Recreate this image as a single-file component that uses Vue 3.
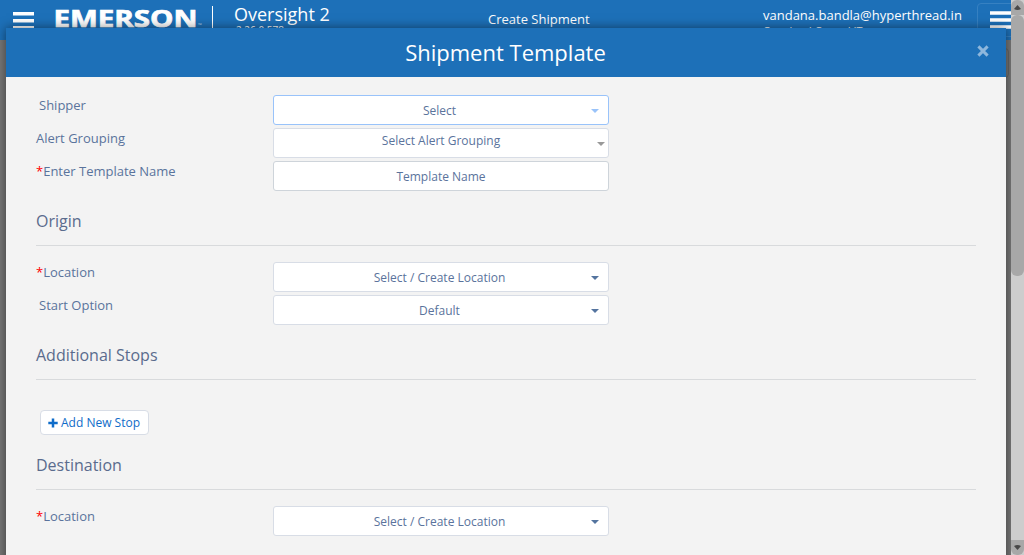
<script setup>
const sections = [
  {
    title: '',
    rows: [
      { label: 'Shipper', indent: true, value: 'Select', kind: 'focused', caret: true },
      { label: 'Alert Grouping', value: 'Select Alert Grouping', kind: 'alert', caret: true },
      { label: 'Enter Template Name', required: true, value: 'Template Name', kind: 'input' },
    ],
  },
  {
    title: 'Origin',
    rows: [
      { label: 'Location', required: true, value: 'Select / Create Location', kind: 'dropdown', caret: true },
      { label: 'Start Option', indent: true, value: 'Default', kind: 'dropdown', caret: true },
    ],
  },
  { title: 'Additional Stops', rows: [], addStop: true },
  {
    title: 'Destination',
    rows: [{ label: 'Location', required: true, value: 'Select / Create Location', kind: 'dropdown', caret: true }],
  },
]
</script>

<template>
  <div class="page">
    <header class="topbar">
      <svg class="menu" width="21" height="20" viewBox="0 0 21 20">
        <path d="M0 1.7h21M0 8.7h21M0 15.7h21" stroke="#fff" stroke-width="3.4" />
      </svg>
      <svg class="logo" width="150" height="24" viewBox="0 0 150 24">
        <text x="-1.5" y="19" textLength="144" lengthAdjust="spacingAndGlyphs" class="logo-text">EMERSON</text>
        <text x="143" y="19" class="tm">™</text>
      </svg>
      <div class="divider"></div>
      <div class="product">
        <div class="product-name">Oversight 2</div>
        <div class="version">2.26.0.578</div>
      </div>
      <div class="page-title">Create Shipment</div>
      <div class="account">
        <div class="email">vandana.bandla@hyperthread.in</div>
        <div class="org">Copeland Cargo LIT</div>
      </div>
      <div class="toggler">
        <svg width="24" height="20" viewBox="0 0 24 20">
          <path d="M0 2h24M0 9h24M0 16h24" stroke="#fff" stroke-width="3.6" />
        </svg>
      </div>
    </header>
    <div class="behind"></div>

    <section class="modal">
      <div class="modal-head">
        <h1>Shipment Template</h1>
        <svg class="close" width="12" height="12" viewBox="0 0 12 12">
          <path d="M1.4 1.4l9.2 9.2M10.6 1.4L1.4 10.6" stroke="#8eb7dc" stroke-width="3" />
        </svg>
      </div>
      <div class="modal-body">
        <div v-for="(s, i) in sections" :key="i" class="section">
          <h2 v-if="s.title">{{ s.title }}</h2>
          <div v-for="r in s.rows" :key="r.label" class="row">
            <label :class="{ indent: r.indent }"><b v-if="r.required">*</b>{{ r.label }}</label>
            <div class="field" :class="r.kind">
              <span>{{ r.value }}</span>
              <i v-if="r.caret" class="caret"></i>
            </div>
          </div>
          <div v-if="s.addStop" class="add">
            <button>
              <svg width="10" height="10" viewBox="0 0 10 10">
                <path d="M5 0.4v9.2M0.3 5h9.4" stroke="#0f6cc9" stroke-width="2.5" />
              </svg>
              <span>Add New Stop</span>
            </button>
          </div>
        </div>
      </div>
    </section>

    <div class="scrollbar">
      <div class="arrow up"><svg width="7" height="5" viewBox="0 0 7 5"><path d="M3.5 0L7 4Q3.5 6 0 4z" fill="#484848" /></svg></div>
      <div class="thumb"></div>
      <div class="arrow down"><svg width="7" height="5" viewBox="0 0 7 5"><path d="M3.5 5L7 1Q3.5 -1 0 1z" fill="#484848" /></svg></div>
    </div>
  </div>
</template>

<style>
body {
  overflow: hidden;
}
</style>

<style scoped>
.page {
  position: relative;
  width: 1024px;
  height: 555px;
  overflow: hidden;
  background: #777;
  font-family: "Open Sans", "Noto Sans", sans-serif;
  font-size: 13px;
  color: #5a739c;
}
.topbar {
  height: 40px;
  display: flex;
  align-items: flex-start;
  background: #1d70b8;
  color: #fff;
}
.topbar > * {
  flex: none;
}
.menu {
  margin: 12px 0 0 13px;
}
.logo {
  margin: 8px 0 0 21px;
  overflow: visible;
}
.logo-text {
  font: bold 24px "Open Sans", sans-serif;
  fill: #fff;
  stroke: #fff;
  stroke-width: 0.7px;
}
.tm {
  font-size: 5px;
  fill: #b9d3ea;
}
.divider {
  width: 1px;
  height: 28px;
  margin: 6px 0 0 7px;
  background: #fff;
}
.product {
  width: 254px;
  margin-left: 21px;
}
.product-name {
  font-size: 18px;
  line-height: 22px;
  margin-top: 3px;
}
.version {
  font-size: 10px;
  line-height: 12px;
  margin: -1px 0 0 2px;
}
.page-title {
  width: 275px;
  line-height: 20px;
  margin-top: 9px;
}
.account {
  width: 214px;
}
.email {
  line-height: 20px;
  margin-top: 5px;
}
.org {
  font-size: 11px;
  line-height: 14px;
  margin-top: -1px;
}
.toggler {
  box-sizing: border-box;
  width: 47px;
  height: 34px;
  margin-top: 3px;
  padding: 7px 0 0 12px;
  border: 1px solid #3681c2;
  border-radius: 4px;
}
.behind {
  position: absolute;
  right: 15px;
  top: 48px;
  width: 80px;
  height: 28px;
  border: 1px solid #666;
  border-radius: 4px;
}
.modal {
  position: absolute;
  left: 6px;
  top: 28px;
  width: 1000px;
  height: 540px;
  background: #f3f3f3;
  box-shadow: 0 0 10px rgba(0, 0, 0, 0.5);
}
.modal-head {
  height: 49px;
  display: flex;
  align-items: center;
  background: #1d70b8;
}
h1 {
  flex: 1;
  margin: -2px 0 0 28px;
  text-align: center;
  font-size: 22px;
  line-height: 30px;
  font-weight: 400;
  color: #fff;
}
.close {
  margin: -3px 17px 0 0;
}
.modal-body {
  padding: 18px 30px 0;
}
h2 {
  margin: 0 0 16px;
  height: 51px;
  border-bottom: 1px solid #d8dadc;
  font-size: 16px;
  font-weight: 400;
  line-height: 54px;
  color: #5a6b8d;
}
.row {
  display: flex;
  height: 30px;
  margin-bottom: 3px;
}
label {
  width: 237px;
  line-height: 20px;
}
label.indent {
  box-sizing: border-box;
  padding-left: 3px;
}
label b {
  color: #f00;
  font-weight: 400;
}
.field {
  box-sizing: border-box;
  width: 336px;
  height: 30px;
  display: flex;
  align-items: center;
  border: 1px solid #d8dde6;
  border-radius: 3px;
  background: #fff;
  font-size: 12px;
  line-height: 18px;
}
.field span {
  flex: 1;
  text-align: center;
  margin-top: 2px;
}
.caret {
  border: 4px solid transparent;
  border-top-color: #54749f;
  border-bottom: 0;
  margin: 2px 9px 0 -17px;
}
.dropdown span,
.focused span {
  padding-right: 3px;
}
.focused {
  border-color: #99c3fa;
}
.focused .caret {
  border-top-color: #99c3fa;
}
.field.alert span {
  margin-top: -4px;
}
.alert .caret {
  border-top-color: #999;
  margin-right: 3px;
  margin-left: -11px;
}
.input {
  border-color: #ced4da;
}
.add {
  box-sizing: border-box;
  height: 42px;
  padding: 14px 0 0 4px;
}
button {
  box-sizing: border-box;
  width: 109px;
  height: 25px;
  display: flex;
  align-items: center;
  gap: 3px;
  padding: 0 0 0 7px;
  border: 1px solid #d8dde6;
  border-radius: 4px;
  background: #fff;
  color: #0f6cc9;
  font: 12px "Open Sans", sans-serif;
  white-space: nowrap;
}
.scrollbar {
  position: absolute;
  top: 0;
  right: 0;
  width: 13px;
  height: 555px;
  display: flex;
  flex-direction: column;
  background: #cdcdcd;
}
.arrow {
  height: 15px;
  display: flex;
  align-items: center;
  justify-content: center;
  background: #a8a8a8;
}
.up {
  border-radius: 6px 6px 0 0;
}
.down {
  margin-top: auto;
  border-radius: 0 0 6px 6px;
}
.thumb {
  height: 261px;
  border-radius: 6px;
  background: #a8a8a8;
}
</style>
